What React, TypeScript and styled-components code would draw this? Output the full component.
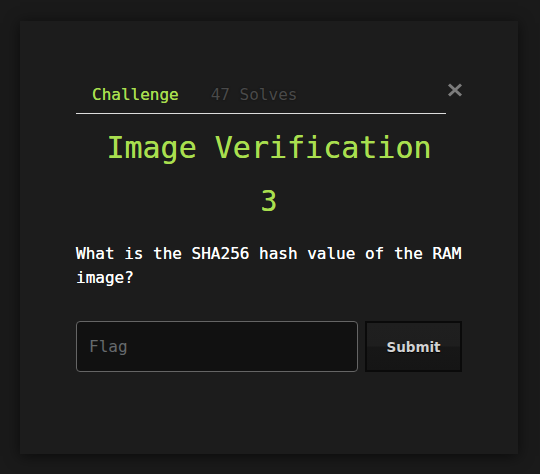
import React from "react";
import styled, { createGlobalStyle } from "styled-components";

const Global = createGlobalStyle`
  html, body { margin: 0; padding: 0; background: #1a1a1a; }
  body { font-family: "DejaVu Sans Mono", "Liberation Mono", monospace; }
  * { box-sizing: border-box; }
`;

const Page = styled.div`
  width: 540px;
  height: 474px;
  padding: 21px 22px 0 20px;
  background: #1a1a1a;
`;

const Modal = styled.div`
  width: 498px;
  height: 433px;
  background: #1c1c1c;
  box-shadow: 0 2px 14px rgba(0, 0, 0, 0.6);
  padding: 54px 56px 0 56px;
  display: flex;
  flex-direction: column;
`;

const Header = styled.div`
  display: flex;
  align-items: flex-start;
`;

const Tabs = styled.nav`
  flex: 0 0 370px;
  display: flex;
  border-bottom: 1px solid #dcdcdc;
`;

const Tab = styled.span<{ $active?: boolean }>`
  padding: 8px 16px 6px;
  font-size: 16px;
  line-height: 24px;
  color: ${(p) => (p.$active ? "#a9df4f" : "#4a4a4a")};
  text-shadow: ${(p) =>
    p.$active ? "0 0 0.5px #a9df4f" : "0 0 2px rgba(0,0,0,0.6)"};
`;

const Close = styled.button`
  margin: 8px 0 0 1px;
  width: 16px;
  height: 14px;
  padding: 0;
  border: 0;
  background: none;
  display: flex;
  cursor: pointer;
`;

const Title = styled.h2`
  margin: 16px 0 0;
  font-size: 30px;
  line-height: 36px;
  font-weight: normal;
  text-align: center;
  color: #a9df4f;
  text-shadow: 0 0 0.6px #a9df4f;
`;

const Value = styled.h3`
  margin: 18px 0 0;
  font-size: 28px;
  line-height: 36px;
  font-weight: normal;
  text-align: center;
  color: #a9df4f;
  text-shadow: 0 0 0.6px #a9df4f;
`;

const Question = styled.p`
  margin: 22px 0 0;
  font-size: 16px;
  line-height: 24px;
  font-weight: normal;
  color: #ffffff;
  text-shadow: 0 0 0.6px #ffffff;
`;

const Form = styled.form`
  margin-top: 31px;
  display: flex;
  gap: 7px;
`;

const FlagInput = styled.input`
  width: 282px;
  height: 51px;
  border: 1px solid #656565;
  border-radius: 4px;
  background: #111111;
  padding: 0 12px;
  font-family: "DejaVu Sans Mono", monospace;
  font-size: 16px;
  color: #ddd;
  outline: none;
  &::placeholder { color: #666a6d; }
`;

const SubmitButton = styled.button`
  width: 97px;
  height: 51px;
  border: 2px solid #0a0a0a;
  background: linear-gradient(#1f1f1f 0%, #1e1e1e 48%, #171717 52%, #151515 100%);
  font-family: "DejaVu Sans", Verdana, sans-serif;
  font-weight: bold;
  font-size: 13.5px;
  color: #d2d2d2;
  text-shadow: 0 1px 1px #000;
  cursor: pointer;
`;

export default function App() {
  return (
    <>
      <Global />
      <Page>
        <Modal>
          <Header>
            <Tabs>
              <Tab $active>Challenge</Tab>
              <Tab>47 Solves</Tab>
            </Tabs>
            <Close aria-label="Close">
              <svg width="16" height="14" viewBox="0 0 16 14">
                <path d="M2 1.5 L14 12.5 M14 1.5 L2 12.5" stroke="#7c7c7c" strokeWidth="3" strokeLinecap="butt" />
              </svg>
            </Close>
          </Header>
          <Title>Image Verification</Title>
          <Value>3</Value>
          <Question>What is the SHA256 hash value of the RAM image?</Question>
          <Form onSubmit={(e) => e.preventDefault()}>
            <FlagInput placeholder="Flag" />
            <SubmitButton type="submit">Submit</SubmitButton>
          </Form>
        </Modal>
      </Page>
    </>
  );
}
